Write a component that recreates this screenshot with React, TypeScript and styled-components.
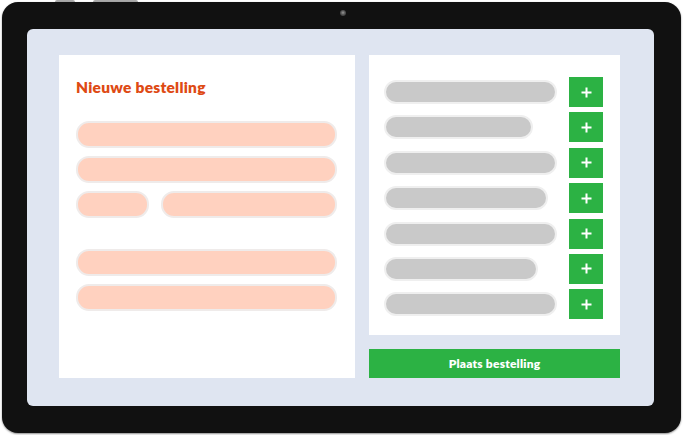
import React from "react";
import styled, { createGlobalStyle } from "styled-components";

const Global = createGlobalStyle`
  html, body { margin: 0; padding: 0; background: #ffffff; }
  body { font-family: "Lato", "Noto Sans", sans-serif; }
  * { box-sizing: border-box; }
`;

const Stage = styled.div`
  position: relative;
  width: 683px;
  height: 435px;
  padding: 2px 2px 2px 2px;
`;

const SideKey = styled.div<{ $left: number; $width: number }>`
  position: absolute;
  top: 0;
  left: ${(p) => p.$left}px;
  width: ${(p) => p.$width}px;
  height: 2px;
  border-radius: 2px 2px 0 0;
  background: #a8a8a8;
`;

const Frame = styled.div`
  position: relative;
  width: 679px;
  height: 431px;
  border-radius: 16px;
  background: #111111;
  padding: 27px 27px 27px 25px;
  box-shadow: 0 1px 2px rgba(0, 0, 0, 0.45);
`;

const Camera = styled.div`
  position: absolute;
  top: 8px;
  left: 338px;
  width: 6px;
  height: 6px;
  border-radius: 50%;
  background: radial-gradient(circle at 50% 45%, #9a9a9a 0, #555 45%, #2a2a2a 100%);
`;

const Screen = styled.div`
  width: 100%;
  height: 100%;
  border-radius: 6px;
  background: #dfe5f1;
  display: flex;
  gap: 14px;
  padding: 26px 34px 28px 32px;
`;

const FormPanel = styled.div`
  flex: 0 0 296px;
  background: #ffffff;
  padding: 23px 18px 0 17px;
  display: flex;
  flex-direction: column;
`;

const Title = styled.h1`
  margin: 0 0 25px 0;
  font-family: "Lato", "Noto Sans", sans-serif;
  font-weight: 800;
  font-size: 15.5px;
  line-height: 18px;
  color: #de4a14;
  letter-spacing: 0.25px;
`;

const FieldGroup = styled.div<{ $gap?: number }>`
  display: flex;
  flex-direction: column;
  gap: 8px;
  margin-bottom: ${(p) => p.$gap ?? 0}px;
`;

const FieldRow = styled.div`
  display: flex;
  gap: 12px;
`;

const Field = styled.div<{ $w?: number }>`
  height: 27px;
  border-radius: 13px;
  background: #ffd1bf;
  border: 2px solid #efebea;
  ${(p) => (p.$w ? `flex: 0 0 ${p.$w}px;` : "flex: 1 1 auto;")}
`;

const RightCol = styled.div`
  flex: 0 0 251px;
  display: flex;
  flex-direction: column;
  gap: 14px;
`;

const ListPanel = styled.div`
  flex: 1 1 auto;
  background: #ffffff;
  padding: 22px 17px 0 15px;
  display: flex;
  flex-direction: column;
  gap: 5.4px;
`;

const ItemRow = styled.div`
  display: flex;
  align-items: center;
  justify-content: space-between;
  height: 30px;
`;

const ItemBar = styled.div<{ $w: number }>`
  width: ${(p) => p.$w}px;
  height: 24px;
  border-radius: 12px;
  background: #c9c9c9;
  border: 2px solid #efefef;
`;

const AddButton = styled.button`
  width: 34px;
  height: 30px;
  border: 0;
  padding: 0;
  background: #2cb244;
  display: flex;
  align-items: center;
  justify-content: center;
  cursor: pointer;
`;

const OrderButton = styled.button`
  flex: 0 0 29px;
  border: 0;
  background: #2cb244;
  color: #ffffff;
  font-family: "Lato", "Noto Sans", sans-serif;
  font-weight: 800;
  font-size: 12px;
  letter-spacing: 0.2px;
  cursor: pointer;
  padding: 0;
`;

const Plus = () => (
  <svg width="11" height="11" viewBox="0 0 11 11">
    <path d="M5.5 0.5v10M0.5 5.5h10" stroke="#ffffff" strokeWidth="2" fill="none" />
  </svg>
);

const items = [173, 149, 173, 164, 173, 154, 173];

export default function App() {
  return (
    <>
      <Global />
      <Stage>
        <SideKey $left={55} $width={20} />
        <SideKey $left={93} $width={45} />
        <Frame>
          <Camera />
          <Screen>
            <FormPanel>
              <Title>Nieuwe bestelling</Title>
              <FieldGroup $gap={31}>
                <Field />
                <Field />
                <FieldRow>
                  <Field $w={73} />
                  <Field />
                </FieldRow>
              </FieldGroup>
              <FieldGroup>
                <Field />
                <Field />
              </FieldGroup>
            </FormPanel>
            <RightCol>
              <ListPanel>
                {items.map((w, i) => (
                  <ItemRow key={i}>
                    <ItemBar $w={w} />
                    <AddButton aria-label="Toevoegen">
                      <Plus />
                    </AddButton>
                  </ItemRow>
                ))}
              </ListPanel>
              <OrderButton>Plaats bestelling</OrderButton>
            </RightCol>
          </Screen>
        </Frame>
      </Stage>
    </>
  );
}
